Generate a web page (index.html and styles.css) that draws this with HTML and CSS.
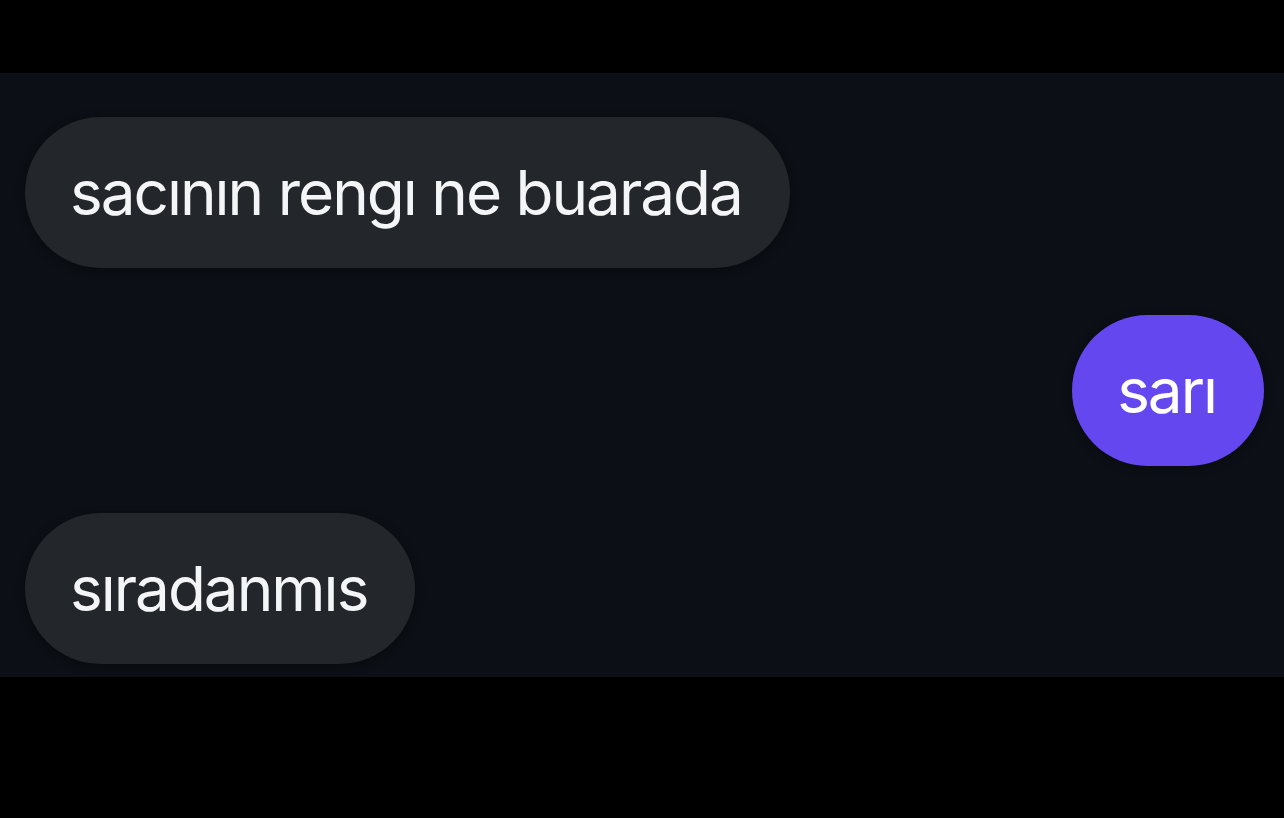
FILE: index.html
```html
<!DOCTYPE html>
<html lang="tr">
<head>
<meta charset="utf-8">
<title>Chat</title>
<link rel="stylesheet" href="styles.css">
</head>
<body>
<div class="screen">
  <div class="bar-top"></div>
  <main class="chat">
    <div class="bubble incoming">sacının rengı ne buarada</div>
    <div class="bubble outgoing">sarı</div>
    <div class="bubble incoming">sıradanmıs</div>
  </main>
  <div class="bar-bottom"></div>
</div>
</body>
</html>
```

FILE: styles.css
```css
html, body {
  margin: 0;
  padding: 0;
  background: #000;
}
.screen {
  width: 1284px;
  height: 818px;
  display: flex;
  flex-direction: column;
  background: #000;
}
.bar-top {
  height: 73px;
  flex: none;
}
.chat {
  height: 604px;
  flex: none;
  box-sizing: border-box;
  background: #0c1016;
  padding: 44px 20px 0 25px;
  display: flex;
  flex-direction: column;
  gap: 47px;
  font-family: Inter, "Noto Sans", sans-serif;
}
.bar-bottom {
  flex: 1;
}
.bubble {
  height: 151px;
  box-sizing: border-box;
  border-radius: 76px;
  padding: 0 48px 0 45px;
  display: flex;
  align-items: center;
  font-size: 62px;
  letter-spacing: -2px;
  color: #f4f5f6;
  width: max-content;
  box-shadow: 0 2px 10px rgba(0,0,0,0.45);
}
.incoming {
  background: #23262b;
  align-self: flex-start;
}
.outgoing {
  background: #6547ef;
  align-self: flex-end;
  color: #fff;
}
```
